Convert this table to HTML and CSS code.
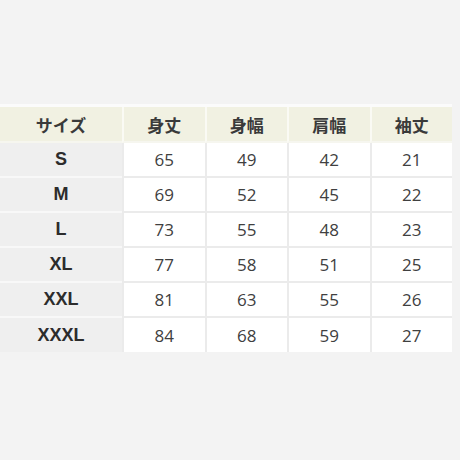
FILE: index.html
```html
<!DOCTYPE html>
<html lang="ja">
<head>
<meta charset="utf-8">
<link rel="stylesheet" href="styles.css">
</head>
<body>
<div class="page">
  <table class="size-table">
    <thead>
      <tr>
        <th class="label">サイズ</th>
        <th>身丈</th>
        <th>身幅</th>
        <th>肩幅</th>
        <th>袖丈</th>
      </tr>
    </thead>
    <tbody>
      <tr><th class="label">S</th><td>65</td><td>49</td><td>42</td><td>21</td></tr>
      <tr><th class="label">M</th><td>69</td><td>52</td><td>45</td><td>22</td></tr>
      <tr><th class="label">L</th><td>73</td><td>55</td><td>48</td><td>23</td></tr>
      <tr><th class="label">XL</th><td>77</td><td>58</td><td>51</td><td>25</td></tr>
      <tr><th class="label">XXL</th><td>81</td><td>63</td><td>55</td><td>26</td></tr>
      <tr><th class="label">XXXL</th><td>84</td><td>68</td><td>59</td><td>27</td></tr>
    </tbody>
  </table>
</div>
</body>
</html>
```

FILE: styles.css
```css
html, body {
  margin: 0;
  padding: 0;
  background: #f3f3f3;
}

.page {
  width: 460px;
  height: 460px;
  padding-top: 104px;
  box-sizing: border-box;
}

.size-table {
  width: 452px;
  border-collapse: separate;
  border-spacing: 0;
  border-top: 3px solid #fbfbfb;
  table-layout: fixed;
  font-family: "Liberation Sans", "Noto Sans CJK JP", sans-serif;
  color: #333;
}

.size-table th,
.size-table td {
  height: 33px;
  padding: 0;
  text-align: center;
  vertical-align: middle;
  border-bottom: 2px solid #ebebeb;
  border-left: 2px solid #ebebeb;
}

.size-table th:first-child {
  width: 122px;
  border-left: none;
}

.size-table thead th {
  height: 34px;
  background: #f1f1e2;
  font-family: "Noto Sans CJK JP", sans-serif;
  font-weight: 700;
  font-size: 17px;
  color: #3a3a3a;
  border-bottom: 2px solid #f6f6ef;
  border-left: 2px solid #fafaf4;
}

.size-table thead th:first-child {
  border-left: none;
}

.size-table tbody th {
  background: #efefef;
  font-weight: 700;
  font-size: 18px;
  color: #2c2c2c;
  border-bottom: 2px solid #f8f8f8;
}

.size-table tbody td {
  background: #ffffff;
  font-family: "Open Sans", "Liberation Sans", sans-serif;
  font-size: 17px;
  color: #404040;
}

.size-table tbody tr:last-child th,
.size-table tbody tr:last-child td {
  border-bottom: none;
  height: 34px;
}
```
